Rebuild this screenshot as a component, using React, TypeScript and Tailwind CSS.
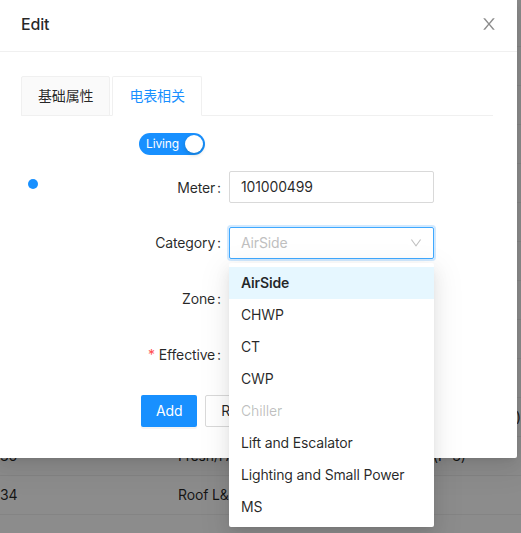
import React from 'react';

const font = { fontFamily: 'Inter, "Noto Sans CJK SC", sans-serif', letterSpacing: '-0.15px' };

const bgRows = [
  { a: '', b: 'Fresh Air', c: '(LG1_AHU_01)' },
  { a: '36', b: 'Fresh/FA Pack', c: '(P-3)' },
  { a: '34', b: 'Roof L&P', c: '' },
  { a: '68', b: 'PA Pack (LG1_PA_01)', c: '' },
];

const options = [
  { label: 'AirSide', active: true },
  { label: 'CHWP' },
  { label: 'CT' },
  { label: 'CWP' },
  { label: 'Chiller', disabled: true },
  { label: 'Lift and Escalator' },
  { label: 'Lighting and Small Power' },
  { label: 'MS' },
];

function CloseIcon() {
  return (
    <svg viewBox="64 64 896 896" className="w-4 h-4" fill="currentColor">
      <path d="M563.8 512l262.5-312.9c4.4-5.2.7-13.1-6.1-13.1h-79.8c-4.7 0-9.2 2.1-12.3 5.7L511.6 449.8 295.1 191.7c-3-3.6-7.5-5.7-12.3-5.7H203c-6.8 0-10.5 7.9-6.1 13.1L459.4 512 196.9 824.9A7.95 7.95 0 00203 838h79.8c4.7 0 9.2-2.1 12.3-5.7l216.5-258.1 216.5 258.1c3 3.6 7.5 5.7 12.3 5.7h79.8c6.8 0 10.5-7.9 6.1-13.1L563.8 512z" />
    </svg>
  );
}

function DownIcon() {
  return (
    <svg viewBox="64 64 896 896" className="w-3 h-3" fill="currentColor">
      <path d="M884 256h-75c-5.1 0-9.9 2.5-12.9 6.6L512 654.2 227.9 262.6c-3-4.1-7.8-6.6-12.9-6.6h-75c-6.5 0-10.3 7.4-6.5 12.7l352.6 486.1c12.8 17.6 39 17.6 51.7 0l352.6-486.1c3.9-5.3.1-12.7-6.4-12.7z" />
    </svg>
  );
}

function Label({ text, required }: { text: string; required?: boolean }) {
  return (
    <span className="text-sm text-black/85 whitespace-nowrap">
      {required && <span className="text-[#ff4d4f] mr-1">*</span>}
      {text}
      <span className="ml-[2px] mr-2">:</span>
    </span>
  );
}

export default function App() {
  return (
    <div className="relative w-[521px] h-[533px] overflow-hidden bg-white" style={font}>
      {/* page underneath */}
      <div className="pt-[8px]">
        {Array.from({ length: 13 }).map((_, i) => {
          const r = bgRows[i - 10];
          return (
            <div key={i} className="h-[39px] border-b border-[#f0f0f0] flex items-center text-sm text-black/85 whitespace-nowrap">
              <div className="w-[178px]">{r?.a}</div>
              <div className="w-[255px]">{r?.b}</div>
              <div>{r?.c}</div>
            </div>
          );
        })}
      </div>

      {/* mask */}
      <div className="absolute inset-0 bg-black/45" />

      {/* modal */}
      <div className="absolute left-[-3px] top-[-3px] w-[520px] h-[461px] bg-white rounded-[2px] shadow-[0_3px_6px_-4px_rgba(0,0,0,0.12),0_6px_16px_0_rgba(0,0,0,0.08),0_9px_28px_8px_rgba(0,0,0,0.05)] flex flex-col">
        <div className="h-[55px] px-6 flex items-center justify-between border-b border-[#f0f0f0]">
          <span className="text-base font-medium text-black/85">Edit</span>
          <span className="text-black/45 mr-[-4px]">
            <CloseIcon />
          </span>
        </div>

        <div className="px-6 pt-6 flex flex-col">
          <div className="flex gap-[2px] border-b border-[#f0f0f0] mb-[17px]">
            <div className="h-10 -mb-px px-4 flex items-center text-sm text-black/85 bg-[#fafafa] border border-[#f0f0f0] rounded-t-[2px]">
              基础属性
            </div>
            <div className="h-10 -mb-px px-4 flex items-center text-sm text-[#1890ff] bg-white border border-[#f0f0f0] border-b-white rounded-t-[2px]">
              电表相关
            </div>
          </div>

          <div className="ml-[118px] w-[66px] h-[22px] rounded-full bg-[#1890ff] flex items-center justify-between pl-[7px] pr-[2px]">
            <span className="text-xs text-white">Living</span>
            <span className="w-[18px] h-[18px] rounded-full bg-white shadow-[0_2px_4px_rgba(0,35,11,0.2)]" />
          </div>

          <div className="flex mt-4">
            <div className="w-[208px] h-8 flex items-center">
              <span className="ml-[7px] mb-[7px] w-2.5 h-2.5 rounded-full bg-[#1890ff]" />
              <span className="ml-auto">
                <Label text="Meter" />
              </span>
            </div>
            <div className="w-[205px] h-8 border border-[#d9d9d9] rounded-[2px] px-[11px] flex items-center text-sm text-black/85">
              101000499
            </div>
          </div>

          <div className="flex mt-6">
            <div className="w-[208px] h-8 flex items-center justify-end">
              <Label text="Category" />
            </div>
            <div className="w-[205px] h-8 border border-[#40a9ff] rounded-[2px] pl-[11px] pr-[11px] flex items-center justify-between text-sm text-[#bfbfbf] shadow-[0_0_0_2px_rgba(24,144,255,0.2)]">
              <span>AirSide</span>
              <DownIcon />
            </div>
          </div>

          <div className="flex mt-6">
            <div className="w-[208px] h-8 flex items-center justify-end">
              <Label text="Zone" />
            </div>
            <div className="w-[205px] h-8 border border-[#d9d9d9] rounded-[2px]" />
          </div>

          <div className="flex mt-6">
            <div className="w-[208px] h-8 flex items-center justify-end">
              <Label text="Effective" required />
            </div>
            <div className="w-[205px] h-8 border border-[#d9d9d9] rounded-[2px]" />
          </div>

          <div className="flex gap-2 mt-6 ml-[120px]">
            <div className="h-8 px-[15px] rounded-[2px] bg-[#1890ff] text-white text-sm flex items-center shadow-[0_2px_0_rgba(0,0,0,0.045)]">
              Add
            </div>
            <div className="h-8 px-[15px] rounded-[2px] border border-[#d9d9d9] text-black/85 text-sm flex items-center">
              Reset
            </div>
          </div>
        </div>
      </div>

      {/* select dropdown */}
      <div className="absolute left-[229px] top-[263px] w-[205px] py-1 bg-white rounded-[2px] shadow-[0_3px_6px_-4px_rgba(0,0,0,0.12),0_6px_16px_0_rgba(0,0,0,0.08),0_9px_28px_8px_rgba(0,0,0,0.05)]">
        {options.map((o) => (
          <div
            key={o.label}
            className={
              'h-8 px-3 flex items-center text-sm ' +
              (o.active ? 'bg-[#e6f7ff] font-semibold text-black/85' : o.disabled ? 'text-black/25' : 'text-black/85')
            }
          >
            {o.label}
          </div>
        ))}
      </div>
    </div>
  );
}
